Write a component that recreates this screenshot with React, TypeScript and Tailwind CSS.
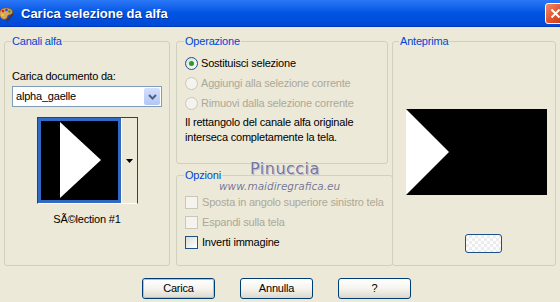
import React from 'react';

function Radio({ label, checked, disabled }: { label: string; checked?: boolean; disabled?: boolean }) {
  return (
    <div className="flex h-[20px] items-center whitespace-nowrap">
      <span
        className={`flex h-[13px] w-[13px] items-center justify-center rounded-full border ${
          disabled ? 'border-[#cac8bb] bg-[#f4f3ee]' : 'border-[#1c5180] bg-gradient-to-br from-[#dcdcd7] to-white'
        }`}
      >
        {checked && <span className="h-[5px] w-[5px] rounded-full bg-[#21a121]" />}
      </span>
      <span className={`ml-[3px] ${disabled ? 'text-[#aca899]' : 'text-black'}`}>{label}</span>
    </div>
  );
}

function Check({ label, disabled }: { label: string; disabled?: boolean }) {
  return (
    <div className="flex h-[20px] items-center whitespace-nowrap">
      <span
        className={`h-[13px] w-[13px] border ${
          disabled ? 'border-[#cac8bb] bg-[#f4f3ee]' : 'border-[#1c5180] bg-gradient-to-br from-[#dcdcd7] to-white'
        }`}
      />
      <span className={`ml-[4px] ${disabled ? 'text-[#aca899]' : 'text-black'}`}>{label}</span>
    </div>
  );
}

function XpButton({ children, primary }: { children: React.ReactNode; primary?: boolean }) {
  return (
    <button className="h-[21px] w-[73px] rounded-[3px] border border-[#003c74] bg-gradient-to-b from-white via-[#f5f4ee] to-[#dcd8cc] p-0">
      <span
        className={`flex h-full w-full items-center justify-center rounded-[2px] border ${
          primary ? 'border-[#a8c0f0]' : 'border-transparent'
        }`}
      >
        {children}
      </span>
    </button>
  );
}

function Legend({ children }: { children: React.ReactNode }) {
  return <legend className="ml-[-1px] px-[1px] text-[11px] leading-[13px] text-[#0046d5]">{children}</legend>;
}

export default function App() {
  return (
    <div className="relative h-[302px] w-[560px] overflow-hidden bg-[#ece9d8] font-['Liberation_Sans',Arial,sans-serif] text-[11px] leading-[13px] tracking-[-0.2px] text-black">
      {/* Title bar */}
      <div className="flex h-[27px] items-center border-b border-[#0036b8] bg-gradient-to-b from-[#2a78f6] via-[#0054e3] to-[#0049d6]">
        <svg width="16" height="16" viewBox="0 0 16 16" className="ml-[-2px] mt-[1px]">
          <path d="M2 5 C4 1 11 1 14 4 C16 7 13 9 11 9 C9 9 10 12 8 13 C4 15 0 10 2 5 Z" fill="#d9a35f" stroke="#7a4a1c" strokeWidth="0.8" />
          <circle cx="5" cy="5" r="1.3" fill="#e02020" />
          <circle cx="8.5" cy="4" r="1.3" fill="#2050e0" />
          <circle cx="11.5" cy="5.5" r="1.2" fill="#20a030" />
          <circle cx="4.5" cy="9" r="1.2" fill="#f0d020" />
          <path d="M9 15 L15 8" stroke="#5a3010" strokeWidth="1.5" />
        </svg>
        <span className="ml-[7px] text-[13px] font-bold tracking-normal text-white [text-shadow:1px_1px_#0a2a8a]">
          Carica selezione da alfa
        </span>
        <div className="ml-auto mr-[-6px] mt-[1px] flex h-[21px] w-[21px] items-center justify-center rounded-[3px] border border-white bg-gradient-to-br from-[#f08a68] via-[#e2542e] to-[#c43a18]">
          <svg width="11" height="11" viewBox="0 0 11 11">
            <path d="M1.5 1.5 L9.5 9.5 M9.5 1.5 L1.5 9.5" stroke="white" strokeWidth="2" />
          </svg>
        </div>
      </div>

      {/* Body */}
      <div className="flex gap-[6px] px-[4px] pt-[8px]">
        {/* Canali alfa */}
        <fieldset className="h-[231px] w-[167px] rounded-[3px] border border-[#d0d0bf] px-[7px]">
          <Legend>Canali alfa</Legend>
          <div className="mt-[22px]">Carica documento da:</div>
          <div className="mt-[3px] flex h-[21px] w-[150px] items-center border border-[#7f9db9] bg-white pl-[3px] pr-[1px]">
            <span className="flex-1">alpha_gaelle</span>
            <span className="flex h-[17px] w-[16px] items-center justify-center rounded-[2px] bg-gradient-to-b from-[#d4e0fc] to-[#b2c7f5]">
              <svg width="9" height="6" viewBox="0 0 9 6">
                <path d="M1 1 L4.5 4.5 L8 1" stroke="#4d6185" strokeWidth="2" fill="none" />
              </svg>
            </span>
          </div>
          <div className="ml-[25px] mt-[10px] flex h-[87px] w-[101px] border-b border-l border-r border-t border-b-white border-l-[#404040] border-r-[#404040] border-t-[#404040]">
            <div className="h-[85px] w-[83px] border-[3px] border-[#316ac5] bg-black">
              <svg width="77" height="79" viewBox="0 0 77 79">
                <polygon points="19,1 60,39 19,77" fill="white" />
              </svg>
            </div>
            <div className="flex flex-1 items-center justify-center border-l border-white bg-[#ece9d8]">
              <svg width="7" height="4" viewBox="0 0 7 4">
                <polygon points="0,0 7,0 3.5,4" fill="black" />
              </svg>
            </div>
          </div>
          <div className="mt-[9px] text-center">SÃ©lection #1</div>
        </fieldset>

        {/* Middle column */}
        <div className="flex w-[212px] flex-col gap-[5px]">
          <fieldset className="h-[129px] rounded-[3px] border border-[#d0d0bf] px-[8px]">
            <Legend>Operazione</Legend>
            <div className="mt-[5px]">
              <Radio label="Sostituisci selezione" checked />
              <Radio label="Aggiungi alla selezione corrente" disabled />
              <Radio label="Rimuovi dalla selezione corrente" disabled />
            </div>
            <p className="mt-[2px] leading-[15px]">
              Il rettangolo del canale alfa originale
              <br />
              interseca completamente la tela.
            </p>
          </fieldset>
          <fieldset className="h-[97px] rounded-[3px] border border-[#d0d0bf] px-[8px]">
            <Legend>Opzioni</Legend>
            <div className="mt-[10px]">
              <Check label="Sposta in angolo superiore sinistro tela" disabled />
              <Check label="Espandi sulla tela" disabled />
              <Check label="Inverti immagine" />
            </div>
          </fieldset>
        </div>

        {/* Anteprima */}
        <fieldset className="ml-[-2px] h-[231px] w-[165px] rounded-[3px] border border-[#d0d0bf] px-[7px]">
          <Legend>Anteprima</Legend>
          <div className="ml-[6px] mt-[61px] h-[86px] w-[141px] bg-black">
            <svg width="141" height="86" viewBox="0 0 141 86">
              <polygon points="0,0 43,43 0,86" fill="white" />
            </svg>
          </div>
          <div className="ml-[65px] mt-[39px] h-[19px] w-[37px] rounded-[3px] border border-[#1d4f8a] bg-[repeating-conic-gradient(#ececec_0_25%,#fcfcfc_0_50%)] bg-[length:6px_6px]" />
        </fieldset>
      </div>

      {/* Buttons */}
      <div className="mt-[12px] flex gap-[25px] pl-[142px]">
        <XpButton primary>Carica</XpButton>
        <XpButton>Annulla</XpButton>
        <XpButton>?</XpButton>
      </div>

      {/* Watermark */}
      <div className="pointer-events-none absolute left-[250px] top-[159px] font-['DejaVu_Sans',sans-serif] text-[16px] leading-[20px] tracking-[0.5px] text-[#75759a] [text-shadow:0_0_1px_#ffffff,1px_1px_0_#b8b8cc]">
        Pinuccia
      </div>
      <div className="pointer-events-none absolute left-[219px] top-[180px] font-['DejaVu_Sans',sans-serif] text-[10.5px] italic leading-[12px] tracking-normal text-[#75758f] [text-shadow:0_0_1px_#ffffff]">
        www.maidiregrafica.eu
      </div>
    </div>
  );
}
